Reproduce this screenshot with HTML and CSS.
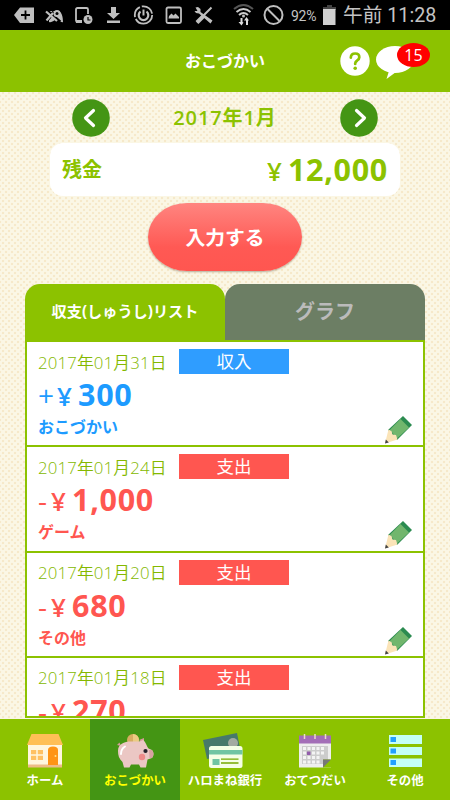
FILE: index.html
```html
<!DOCTYPE html>
<html lang="ja">
<head>
<meta charset="utf-8">
<title>おこづかい</title>
<link rel="stylesheet" href="styles.css">
</head>
<body>
<svg width="0" height="0" class="defs">
  <symbol id="pencil" viewBox="0 0 28 29">
    <path d="M19 1 28 10 13 25 4 15Z" fill="#2b8b50"/>
    <path d="M16.500 4 25 12.500 13 23.500 6 14.800Z" fill="#71b66d"/>
    <path d="M4.500 14.500 7.500 16 8.500 19.500 12 20 13.500 24.500 1 28.500Z" fill="#fbe4b8"/>
    <path d="M1.800 24.500 4.800 27.500 1 28.500Z" fill="#444"/>
  </symbol>
</svg>
<div class="app">
  <div class="status">
    <svg class="status-icons" viewBox="0 0 290 30" fill="#bfbfbf">
      <path d="M14 15 20 7.500H34V23H20Z"/>
      <path d="M25.500 10.500V19.500M21 15H30" stroke="#000" stroke-width="1.800"/>
      <path d="M50 11h8c4 0 5 7 5 11-2 1-4-2-6-3-3 1-5 4-8 3 0-4 0-8 1-11Z"/>
      <path d="M46 10 60 22M46 21 54 12" stroke="#000" stroke-width="3.500"/>
      <path d="M46 11.500 57 21M46.500 20.500 53 13" stroke="#bfbfbf" stroke-width="2.200"/>
      <circle cx="57" cy="13.500" r="3.500"/><circle cx="57" cy="13.500" r="1.500" fill="#000"/>
      <path d="M82 22H77.500Q76 22 76 20.500V9.500Q76 8 77.500 8H86.500Q88 8 88 9.500V14" fill="none" stroke="#bfbfbf" stroke-width="1.800"/>
      <path d="M76 20h6v3h-6Z"/>
      <circle cx="88" cy="19.500" r="4.500"/><path d="M88 17V20H90.500" fill="none" stroke="#000" stroke-width="1.200"/>
      <path d="M111 7H116V13H120L113.500 19 107 13H111ZM107 20.500H120V23H107Z"/>
      <g fill="none" stroke="#bfbfbf" stroke-width="1.800"><circle cx="143.500" cy="15" r="8.700" stroke-dasharray="23 2 12 2 14 2"/><path d="M140.500 11.500A4.800 4.800 0 1 0 146.500 11.500" stroke-width="2.200"/><path d="M143.500 9.500V15.500" stroke-width="2"/><rect x="166.500" y="7.500" width="14.500" height="15.500" rx="1.500"/></g>
      <path d="M168.500 18.500 169 16 171.500 13.500 173.500 15.500 175.500 13.500 179 17V18.500Z"/>
      <path d="M195.500 7.500 198 7 200.500 9 200.500 12 212.500 20.500 210.500 23.500 199 13.500 196 13 194.500 11 197.500 11Z"/>
      <path d="M211.500 7.500 205 14 197 22.500" stroke="#bfbfbf" stroke-width="2"/><path d="M203.500 16 197 22.500" stroke="#bfbfbf" stroke-width="4"/>
      <g fill="none" stroke-width="2"><path d="M234 9Q243.500 1 253 9" stroke="#555"/><path d="M236.500 12Q243.500 6 250.500 12M239 15Q243.500 11 248 15" stroke="#ccc"/></g>
      <circle cx="243.500" cy="16" r="1.500"/>
      <path d="M240.500 18V22H238.500L241.500 25.500 243.500 22.500 242.500 22V18ZM246 25V20.500H244L246.500 17 249 20.500H248V25Z" fill="#ddd"/>
      <g fill="none" stroke="#bfbfbf" stroke-width="2"><circle cx="273.500" cy="15" r="9"/><path d="M267.500 9 279.500 21"/></g>
    </svg>
    <span class="percent">92%</span>
    <svg class="battery" viewBox="0 0 13 20"><path d="M4 0H9V2H13V5H0V2H4Z" fill="#444"/><path d="M0 4H12.500V20H0Z" fill="#d0d0d0"/></svg>
    <span class="clock">午前 11:28</span>
  </div>

  <header class="header">
    <h1>おこづかい</h1>
    <div class="header-actions">
      <svg width="30" height="30" viewBox="0 0 30 30"><circle cx="15" cy="15" r="14.700" fill="#fff"/><path d="M10.800 11.600Q11 7.500 15.200 7.500 19.300 7.500 19.300 11.200 19.300 13 17.200 14.500 15.200 15.800 15.200 17.500V18" fill="none" stroke="#8cc200" stroke-width="2.700" stroke-linecap="round"/><circle cx="15.200" cy="22.300" r="1.800" fill="#8cc200"/></svg>
      <div class="bubble">
        <svg width="39" height="34" viewBox="0 0 39 34"><ellipse cx="19" cy="13.500" rx="19" ry="13.500" fill="#fff"/><path d="M13 25 10.500 33 20 26Z" fill="#fff"/></svg>
        <span class="count">15</span>
      </div>
    </div>
  </header>

  <main class="main">
    <div class="month">
      <svg width="38" height="38" viewBox="0 0 38 38"><circle cx="19" cy="19" r="18.800" fill="#449514"/><path d="M21.500 11.500 13.500 19 21.500 26.500" class="chev"/></svg>
      <span class="month-label">2017年1月</span>
      <svg width="38" height="38" viewBox="0 0 38 38"><circle cx="19" cy="19" r="18.800" fill="#449514"/><path d="M16.500 11.500 24.500 19 16.500 26.500" class="chev"/></svg>
    </div>
    <div class="balance"><span class="balance-label">残金</span><span class="balance-value"><span class="yen">¥</span>12,000</span></div>
    <button class="enter">入力する</button>
    <div class="tabs"><div class="tab active">収支(しゅうし)リスト</div><div class="tab">グラフ</div></div>
    <div class="list">
      <div class="row income">
        <div class="top"><span class="date">2017年01月31日</span><span class="kind">収入</span></div>
        <div class="amount"><span class="sign plus">+</span><span class="yen">¥</span>300</div>
        <div class="bottom"><span>おこづかい</span><svg class="pencil"><use href="#pencil"/></svg></div>
      </div>
      <div class="row">
        <div class="top"><span class="date">2017年01月24日</span><span class="kind">支出</span></div>
        <div class="amount"><span class="sign">-</span><span class="yen">¥</span>1,000</div>
        <div class="bottom"><span>ゲーム</span><svg class="pencil"><use href="#pencil"/></svg></div>
      </div>
      <div class="row">
        <div class="top"><span class="date">2017年01月20日</span><span class="kind">支出</span></div>
        <div class="amount"><span class="sign">-</span><span class="yen">¥</span>680</div>
        <div class="bottom"><span>その他</span><svg class="pencil"><use href="#pencil"/></svg></div>
      </div>
      <div class="row">
        <div class="top"><span class="date">2017年01月18日</span><span class="kind">支出</span></div>
        <div class="amount"><span class="sign">-</span><span class="yen">¥</span>270</div>
      </div>
    </div>
  </main>

  <nav class="nav">
    <div class="item">
      <svg viewBox="0 0 40 36"><path d="M3 11H37V32H3Z" fill="#fff6df"/><path d="M6.500 1H33.500L38 12H2Z" fill="#ffbf56"/><path d="M3 31.500H37V34.500H3Z" fill="#eebc88"/><path d="M6 17H18V27H6Z" fill="#ffc163"/><path d="M12 17V27M6 22H18" stroke="#fff6df" stroke-width="1.500"/><path d="M23 32V17Q23 13.500 28 13.500 33 13.500 33 17V32Z" fill="#ff9415"/><circle cx="30.500" cy="23" r="1" fill="#ffe08a"/></svg>
      <span>ホーム</span>
    </div>
    <div class="item current">
      <svg viewBox="0 0 40 36"><circle cx="18" cy="7" r="6" fill="#d7ad62"/><path d="M18 1A6 6 0 0 1 18 13Z" fill="#ebcb82"/><path d="M2 12 4.500 9.500 6 13ZM24 7 29 5 29 11Z" fill="#d79b9a"/><path d="M3 18C3 11 9 8.500 16 8.500 22 8.500 25 9 28 7 31 9 31 12 33.500 15.500L37 17Q40 21 37 25L32.500 26.500 31 34.500H25.500L24 31.500H16L14.500 34.500H9L7.500 29C4 26 3 22 3 18Z" fill="#ebc7c4"/><path d="M34 17H37Q40 21 37 25H34.500Z" fill="#d7a2a2"/><circle cx="27" cy="24" r="3.200" fill="#ee8b8a"/><circle cx="30.500" cy="18" r="2.100" fill="#24212b"/><path d="M6 21Q6 16 10 13.500" fill="none" stroke="#fff" stroke-width="2" stroke-linecap="round"/></svg>
      <span>おこづかい</span>
    </div>
    <div class="item">
      <svg viewBox="0 0 40 36"><path d="M-2 7 32 0 36 20 2 26Z" fill="#47796b"/><circle cx="28" cy="10" r="5" fill="#a3aaa1"/><rect x="4" y="13" width="33.500" height="22" rx="2.500" fill="#f5ffe6"/><path d="M4 17H37.500V21.500H4Z" fill="#70c5a3"/><path d="M7.500 26H14.500V32H7.500Z" fill="#70c5a3"/><path d="M16 26.200H33.500M16 30H33.500" stroke="#75a900" stroke-width="1.300"/></svg>
      <span>ハロまね銀行</span>
    </div>
    <div class="item">
      <svg viewBox="0 0 40 36"><path d="M4 3H36V34.500H4Z" fill="#eee"/><path d="M4 2.500H36V10.500H4Z" fill="#a36eb7"/><path d="M7 13H33V31H7Z" fill="#ccc"/><path d="M8 14h3v3H8Zm4.500 0h3v3h-3Zm4.500 0h3v3h-3Zm4.500 0h3v3h-3Zm4.500 0h3v3h-3ZM8 18.500h3v3H8Zm9 0h3v3h-3Zm4.500 0h3v3h-3Zm4.500 0h3v3h-3ZM8 23h3v3H8Zm4.500 0h3v3h-3Zm4.500 0h3v3h-3Zm4.500 0h3v3h-3ZM8 27.500h3v3H8Zm4.500 0h3v3h-3Zm4.500 0h3v3h-3Zm4.500 0h3v3h-3Z" fill="#f4f4f4"/><path d="M12 18.500H15.500V22H12Z" fill="#925cab"/><path d="M28 26.500H36V34.500H28Z" fill="#8cc200"/><path d="M28 26.500H36L28 34.500Z" fill="#777"/><path d="M9.500 1V6M20 1V6M30.500 1V6" stroke="#eadccc" stroke-width="1.500"/></svg>
      <span>おてつだい</span>
    </div>
    <div class="item">
      <svg viewBox="0 0 40 36"><path d="M4 2H37V11H4ZM4 14H37V22H4ZM4 25.500H37V34H4Z" fill="#c4fff7"/><path d="M5.500 4H11V9H5.500ZM5.500 15.500H11V20.500H5.500ZM5.500 27H11V32H5.500Z" fill="#22a1ff"/></svg>
      <span>その他</span>
    </div>
  </nav>
</div>
</body>
</html>
```
FILE: styles.css
```css
* { box-sizing: border-box; }
body { margin: 0; font-family: "Open Sans", "Noto Sans CJK JP", sans-serif; }
.defs { display: block; }
.app {
  width: 450px; height: 800px; overflow: hidden;
  display: flex; flex-direction: column;
  background-color: #fbf7e5;
  background-image: radial-gradient(circle, #f6e9ca 1.1px, transparent 1.6px), radial-gradient(circle, #f6e9ca 1.1px, transparent 1.6px);
  background-size: 6px 6px; background-position: 0 0, 3px 3px;
}
.status { height: 30px; flex: none; background: #000; color: #c4c4c4; display: flex; align-items: center; font-family: Roboto, "Noto Sans CJK JP", sans-serif; white-space: nowrap; }
.status-icons { width: 290px; height: 30px; flex: none; }
.percent { width: 32px; padding: 2px 0 0 1px; font-size: 14px; line-height: 30px; letter-spacing: -.3px; }
.battery { width: 13px; height: 20px; margin-left: 1px; }
.clock { margin-left: 7px; padding-top: 2px; font-size: 19.700px; line-height: 30px; }

.header { height: 62px; flex: none; background: #8cc200; color: #fff; display: grid; grid-template-columns: 115px 220px 115px; align-items: center; }
.header h1 { grid-column: 2; margin: 0; font-size: 16px; line-height: 24px; text-align: center; }
.header-actions { display: flex; gap: 6px; margin-left: 5px; align-items: flex-start; height: 30px; }
.bubble { position: relative; height: 34px; }
.count { position: absolute; left: 21px; top: -3px; width: 33px; height: 24px; border-radius: 50%; background: #f00; font-size: 16px; line-height: 25px; text-align: center; }

.main { flex: 1; min-height: 0; padding: 7px 25px 0; display: flex; flex-direction: column; color: #8cc200; }
.month { display: flex; justify-content: space-between; align-items: center; height: 38px; padding: 0 47px; flex: none; }
.chev { fill: none; stroke: #fff; stroke-width: 3.200px; stroke-linecap: round; stroke-linejoin: round; }
.month-label { font-size: 20px; line-height: 30px; font-weight: 600; letter-spacing: .9px; }
.balance { height: 53px; margin: 6px 25px 0; padding: 0 12px 0 12px; border-radius: 13px; background: #fff; flex: none; display: flex; align-items: center; justify-content: space-between; font-weight: 700; line-height: 40px; }
.balance-label { font-size: 20px; padding-top: 1px; }
.balance-value { font-size: 30.500px; font-weight: 700; letter-spacing: .7px; padding-top: 1px; }
.yen { display: inline-block; width: 21px; font-size: 26px; font-weight: 600; }
.enter { align-self: center; width: 154px; height: 68px; margin-top: 7px; flex: none; border: 0; border-radius: 39px / 34px; background: linear-gradient(#ff8580, #ff5954 65%, #ff5650); box-shadow: 0 1px 2px rgba(80, 60, 40, .4); color: #fff; font: 700 19.800px/30px "Noto Sans CJK JP", sans-serif; }
.tabs { display: grid; grid-template-columns: 1fr 1fr; height: 56px; margin-top: 13px; flex: none; }
.tab { border-radius: 15px 15px 0 0; background: #6c7e64; color: #bbb; font-size: 20px; line-height: 55px; text-align: center; font-weight: 700; }
.tab.active { background: #8cc200; color: #fff; font-size: 15.200px; }
.list { height: 378px; border: 2px solid #8cc200; background: #fff; overflow: hidden; margin-bottom: 1px; flex: none; }
.row { height: 105.300px; border-bottom: 2px solid #8cc200; padding: 7px 11px 0; color: #ff5650; }
.top { display: flex; height: 25px; align-items: center; }
.date { width: 141px; font-size: 16.800px; line-height: 25px; padding-top: 1px; color: #84b800; font-weight: 350; white-space: nowrap; letter-spacing: .15px; }
.kind { width: 110px; height: 25px; background: #ff5650; color: #fff; font-size: 17.500px; line-height: 25px; text-align: center; }
.income .kind { background: #2f9dff; }
.income { color: #1d9bff; }
.amount { height: 40px; line-height: 40px; font-size: 30.500px; font-weight: 700; letter-spacing: .7px; white-space: nowrap; }
.sign { display: inline-block; width: 13px; font-weight: 500; font-size: 28px; }
.plus { width: 19px; }
.bottom { height: 30px; display: flex; justify-content: space-between; font-size: 16px; line-height: 27px; font-weight: 700; }
.pencil { width: 28px; height: 29px; margin-top: 1px; }

.nav { height: 81px; flex: none; display: grid; grid-template-columns: repeat(5, 90px); background: #8cc200; color: #fff; }
.item { display: flex; flex-direction: column; align-items: center; padding-top: 14px; font-size: 12.400px; line-height: 23px; font-weight: 700; white-space: nowrap; }
.item svg { width: 40px; height: 36px; overflow: visible; flex: none; }
.item.current { background: #449514; color: #ff0; }
```
